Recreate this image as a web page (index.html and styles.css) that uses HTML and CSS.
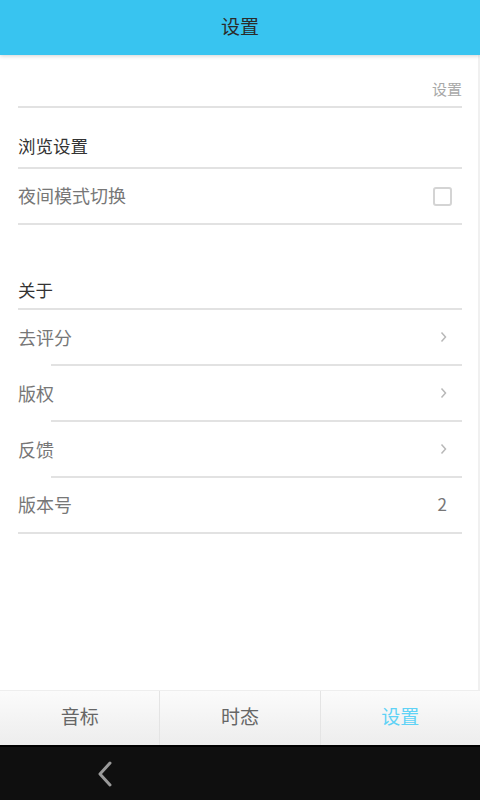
FILE: index.html
```html
<!DOCTYPE html>
<html lang="zh">
<head>
	<meta charset="UTF-8">
	<title>设置</title>
	<link rel="stylesheet" href="styles.css">
</head>
<body>
	<div class="screen">
		<div class="topbar">设置</div>
		<div class="content">
			<div class="caption">设置</div>

			<div class="group">
				<div class="group-title">浏览设置</div>
				<div class="row">
					<span class="label">夜间模式切换</span>
					<span class="check"></span>
				</div>
			</div>

			<div class="group about">
				<div class="group-title">关于</div>
				<div class="row indent">
					<span class="label">去评分</span>
					<svg class="arrow" width="7" height="12" viewBox="0 0 7 12"><polyline points="1.5,1.5 5.5,6 1.5,10.5" fill="none" stroke="#b8b8b8" stroke-width="1.5"/></svg>
				</div>
				<div class="row indent">
					<span class="label">版权</span>
					<svg class="arrow" width="7" height="12" viewBox="0 0 7 12"><polyline points="1.5,1.5 5.5,6 1.5,10.5" fill="none" stroke="#b8b8b8" stroke-width="1.5"/></svg>
				</div>
				<div class="row indent">
					<span class="label">反馈</span>
					<svg class="arrow" width="7" height="12" viewBox="0 0 7 12"><polyline points="1.5,1.5 5.5,6 1.5,10.5" fill="none" stroke="#b8b8b8" stroke-width="1.5"/></svg>
				</div>
				<div class="row">
					<span class="label">版本号</span>
					<span class="value">2</span>
				</div>
			</div>
		</div>
		<div class="tabs">
			<div class="tab">音标</div>
			<div class="tab">时态</div>
			<div class="tab active">设置</div>
		</div>
		<div class="navbar">
			<svg width="16" height="26" viewBox="0 0 16 26">
				<polyline points="13,2 3,13 13,24" fill="none" stroke="#9a9a9a" stroke-width="3" stroke-linecap="round" stroke-linejoin="round"/>
			</svg>
		</div>
	</div>
</body>
</html>
```

FILE: styles.css
```css
body {
	margin: 0;
	font-family: "Noto Sans CJK SC", "Noto Sans", sans-serif;
	background: #fff;
}
.screen {
	width: 480px;
	height: 800px;
	display: flex;
	flex-direction: column;
	overflow: hidden;
}
.topbar {
	height: 51px;
	padding-bottom: 4px;
	flex-shrink: 0;
	background: #38c4f0;
	color: #2b2b2b;
	font-size: 19px;
	line-height: 51px;
	text-align: center;
	box-shadow: 0 1px 4px rgba(0, 0, 0, 0.18);
	position: relative;
	z-index: 1;
}
.content {
	flex: 1;
	padding: 0 16px 0 18px;
	border-right: 2px solid #f0f0f0;
}
.caption {
	text-align: right;
	color: #a8a8a8;
	font-size: 15px;
	line-height: 18px;
	padding: 25px 0 8px;
	border-bottom: 2px solid #e2e2e2;
}
.group-title {
	color: #333;
	font-size: 17.5px;
	line-height: 24px;
	padding: 26px 0 9px;
	border-bottom: 2px solid #e2e2e2;
}
.about .group-title {
	padding-top: 53px;
	padding-bottom: 6px;
}
.row {
	height: 54px;
	display: flex;
	align-items: center;
	justify-content: space-between;
	color: #777;
	font-size: 18px;
	border-bottom: 2px solid #e2e2e2;
	padding-right: 10px;
}
.row .label {
	margin-top: -3px;
}
.row.indent {
	border-bottom: none;
	height: 56px;
	background: linear-gradient(#e2e2e2, #e2e2e2) no-repeat right bottom / calc(100% - 33px) 2px;
}
.check {
	width: 15px;
	height: 15px;
	border: 2px solid #d4d4d4;
	border-radius: 3px;
}
.arrow {
	margin-right: 5px;
	margin-top: -3px;
}
.value {
	color: #777;
	font-size: 17px;
	margin-right: 5px;
	margin-top: -3px;
}
.tabs {
	height: 54px;
	flex-shrink: 0;
	display: flex;
	background: linear-gradient(#fbfbfb, #ededed);
	border-top: 1px solid #eee;
}
.tab {
	flex: 1;
	text-align: center;
	line-height: 50px;
	padding-bottom: 4px;
	font-size: 19px;
	color: #666;
	border-left: 1px solid #e4e4e4;
}
.tab:first-child {
	border-left: none;
}
.tab.active {
	color: #5fd2f6;
}
.navbar {
	height: 53px;
	flex-shrink: 0;
	background: #0f0f0f;
	border-top: 2px solid #000;
	display: flex;
	align-items: center;
	padding-left: 97px;
}
```
